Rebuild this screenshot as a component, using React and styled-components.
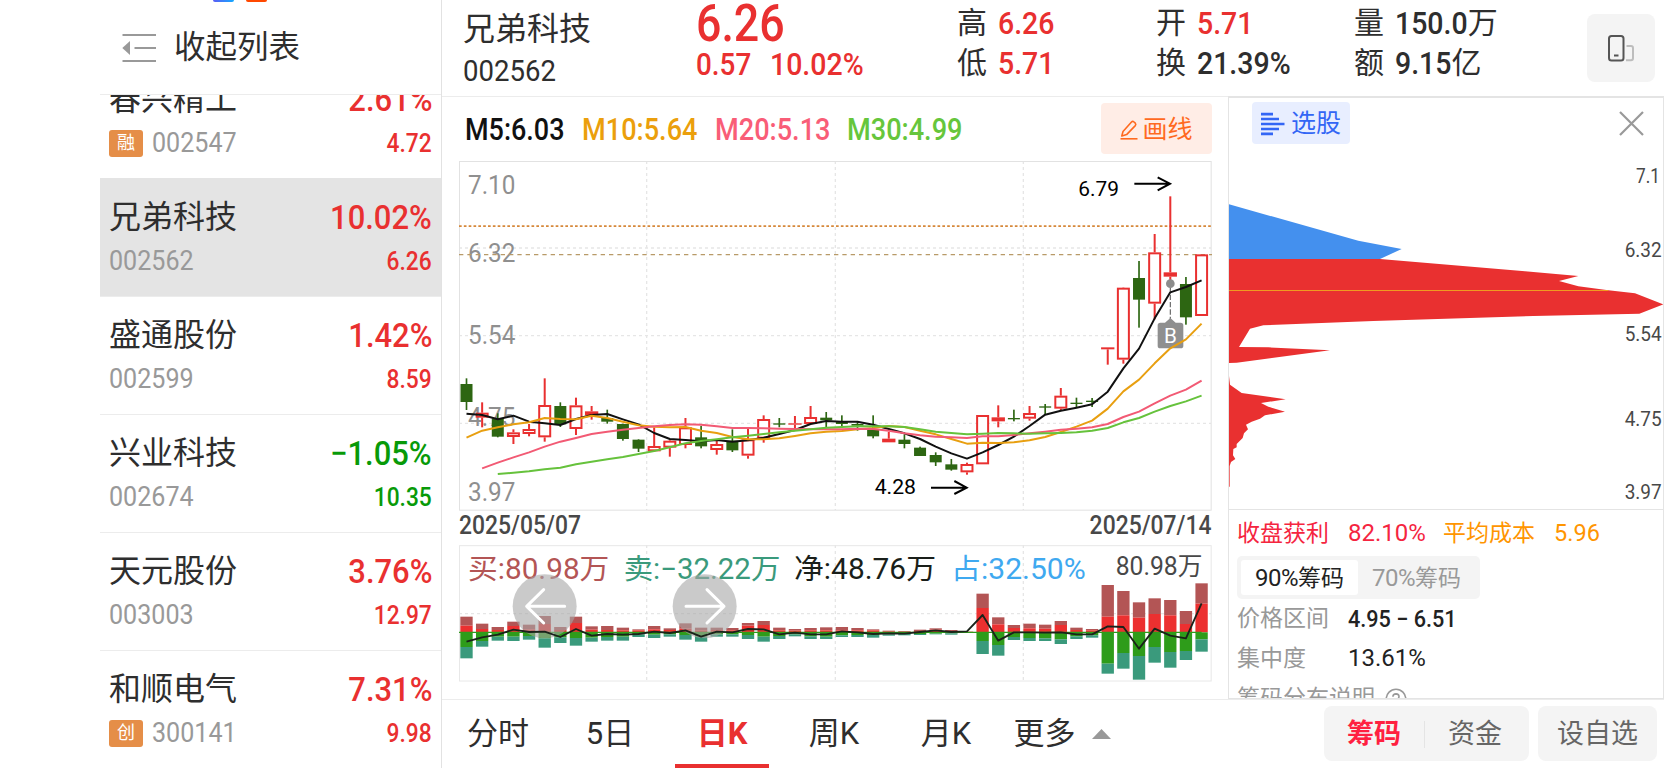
import React from 'react';
import styled, { createGlobalStyle } from 'styled-components';

const FONT = "Roboto, 'Noto Sans CJK SC', sans-serif";

const RED = '#e93030';
const GREEN = '#089a08';
const INK = '#2e2e2e';
const MUTED = '#999';
const LINE = '#ececec';

const GlobalStyle = createGlobalStyle`
  * { box-sizing: border-box; }
  body {
    margin: 0;
    background: #fff;
    color: ${INK};
    font-family: ${FONT};
    overflow: hidden;
  }
`;

/* ---------- shared ---------- */

const Screen = styled.div`
  display: flex;
  width: 1664px;
  height: 768px;
  overflow: hidden;
`;

// Digits are set a little narrower than the CJK text around them
const Num = styled.span`
  display: inline-block;
  font-size: ${props => props.$size}px;
  font-weight: ${props => props.$weight || 400};
  color: ${props => props.$color || 'inherit'};
  line-height: 1;
  white-space: nowrap;
  transform: scaleX(${props => props.$narrow || 0.92});
  transform-origin: ${props => (props.$end ? 'right' : 'left')} center;
`;

/* ---------- stock list ---------- */

const Sidebar = styled.aside`
  display: flex;
  flex-direction: column;
  width: 442px;
  padding-left: 100px;
  border-right: 1px solid #e2e2e2;
`;

const AppDots = styled.div`
  display: flex;
  gap: 12px;
  height: 2px;
  padding-left: 113px;
`;

const AppDot = styled.i`
  width: 21px;
  height: 2px;
  border-radius: 0 0 5px 5px;
  background: ${props => props.$fill};
`;

const ListHeader = styled.header`
  display: flex;
  align-items: center;
  gap: 17px;
  height: 93px;
  padding: 0 0 1px 22px;
  border-bottom: 1px solid ${LINE};
  font-size: 31.5px;
  line-height: 1;
`;

const ListTitle = styled.span`
  padding-top: 1px;
`;

const ListWindow = styled.div`
  flex: 1;
  overflow: hidden;
`;

// The list is scrolled part of the way through its first row
const List = styled.div`
  margin-top: -35px;
`;

const Row = styled.div`
  display: flex;
  flex-direction: column;
  gap: 11px;
  height: 118px;
  padding: 19px 9px 0;
  border-top: 1px solid ${props => (props.$active ? '#e4e4e4' : LINE)};
  background: ${props => (props.$active ? '#e4e4e4' : '#fff')};
`;

const RowLine = styled.div`
  display: flex;
  align-items: center;
  justify-content: space-between;
  height: ${props => props.$h}px;
`;

const StockName = styled.span`
  font-size: 32px;
  line-height: 1;
`;

const CodeGroup = styled.span`
  display: flex;
  align-items: center;
  gap: 9px;
  color: ${MUTED};
`;

const Tag = styled.span`
  width: 34px;
  height: 27px;
  border-radius: 3px;
  background: #e58e48;
  color: #fff;
  font-size: 18px;
  line-height: 26px;
  text-align: center;
`;

/* ---------- quote header ---------- */

const Main = styled.main`
  display: flex;
  flex-direction: column;
  flex: 1;
`;

const Quote = styled.header`
  display: grid;
  grid-template-columns: 233px 261px 199px 198px 233px 68px;
  height: 97px;
  padding-left: 21px;
  border-bottom: 1px solid ${LINE};
`;

const QuoteCell = styled.div`
  display: flex;
  flex-direction: column;
  padding-top: ${props => props.$top}px;
  gap: ${props => props.$gap}px;
  line-height: 1;
`;

const LastPrice = styled(Num)`
  line-height: 44px;
`;

const Change = styled.div`
  display: grid;
  grid-template-columns: 74px 1fr;
`;

const Pair = styled.div`
  display: flex;
  align-items: center;
  gap: 11px;
  height: 30px;
`;

const PairLabel = styled.span`
  font-size: 30px;
  line-height: 1;
`;

const Amount = styled.span`
  display: flex;
  align-items: center;
`;

const Unit = styled(PairLabel)`
  margin-left: ${props => props.$pull}px;
`;

const RotateButton = styled.button`
  display: flex;
  align-items: center;
  justify-content: center;
  width: 68px;
  height: 68px;
  margin-top: 14px;
  padding: 0;
  border: 0;
  border-radius: 8px;
  background: #f4f4f4;
`;

/* ---------- chart column ---------- */

const Body = styled.div`
  display: flex;
  height: 602px;
`;

const ChartColumn = styled.section`
  width: 786px;
  padding: 6px 16px 0 17px;
`;

const Averages = styled.div`
  display: flex;
  align-items: center;
  height: 51px;
  margin-bottom: 7px;
  padding-left: 6px;
`;

const Average = styled.span`
  width: ${props => props.$w}px;
  padding-top: 1px;
  color: ${props => props.$color};
`;

const DrawButton = styled.button`
  display: flex;
  align-items: center;
  justify-content: center;
  gap: 4px;
  width: 111px;
  height: 51px;
  margin-left: auto;
  padding: 2px 0 0;
  border: 0;
  border-radius: 4px;
  background: #ffede6;
  color: #ff6a1f;
  font: 25px/1 ${FONT};
`;

const Dates = styled.div`
  display: flex;
  align-items: center;
  justify-content: space-between;
  height: 34px;
  padding-bottom: 6px;
  color: #484848;
`;

const Plot = styled.svg`
  display: block;
  flex-shrink: 0;
  text { font-family: ${FONT}; }
`;

/* ---------- chip panel ---------- */

const ChipPanel = styled.section`
  display: flex;
  flex-direction: column;
  flex: 1;
  border: 1px solid #e4e4e4;
  border-top-width: 2px;
  margin-top: -1px;
  overflow: hidden;
`;

const ChipHeader = styled.div`
  display: flex;
  flex-shrink: 0;
  align-items: flex-start;
  justify-content: space-between;
  height: 51px;
  padding: 4px 19px 0 23px;
`;

const PickButton = styled.button`
  display: flex;
  align-items: center;
  gap: 6px;
  width: 98px;
  height: 42px;
  padding: 1px 0 0 9px;
  border: 0;
  border-radius: 4px;
  background: #e8eeff;
  color: #3366f5;
  font: 25px/1 ${FONT};
`;

const CloseIcon = styled.svg`
  margin-top: 9px;
`;

const ChipInfo = styled.div`
  flex: 1;
  min-height: 0;
  overflow: hidden;
  border-top: 1px solid #e4e4e4;
  padding: 4px 8px 0;
  font-size: 23px;
  line-height: 1;
`;

const InfoLine = styled.div`
  display: grid;
  grid-template-columns: ${props => props.$cols || '111px 1fr'};
  align-items: center;
  height: ${props => props.$h || 38}px;
  white-space: nowrap;
`;

const Tone = styled.span`
  color: ${props => props.$color};
`;

const Segments = styled.div`
  display: flex;
  width: 243px;
  height: 43px;
  margin-top: 4px;
  padding: 4px;
  border-radius: 5px;
  background: #f4f4f4;
`;

const Segment = styled.span`
  display: flex;
  align-items: center;
  justify-content: center;
  width: 117px;
  padding-top: 1px;
  border-radius: 3px;
  background: ${props => (props.$on ? '#fff' : 'transparent')};
  color: ${props => (props.$on ? '#222' : MUTED)};
`;

const Percent = styled.span`
  font-size: 24px;
  letter-spacing: -0.02em;
`;

const Explain = styled.div`
  display: flex;
  align-items: center;
  gap: 10px;
  height: 41px;
  color: ${MUTED};
`;

/* ---------- bottom bar ---------- */

const Footer = styled.nav`
  display: flex;
  height: 69px;
  padding-right: 7px;
  border-top: 1px solid ${LINE};
  background: #fff;
`;

const Tabs = styled.div`
  display: flex;
  flex: 1;
`;

const Tab = styled.a`
  display: flex;
  align-items: center;
  justify-content: center;
  gap: ${props => (props.$more ? 16 : 0)}px;
  width: ${props => props.$w}px;
  padding-top: ${props => (props.$on ? 3 : 1)}px;
  padding-bottom: ${props => (props.$on ? 0 : 2)}px;
  border-bottom: ${props => (props.$on ? `4px solid ${RED}` : 0)};
  margin: 0 ${props => props.$m || 0}px;
  color: ${props => (props.$on ? RED : INK)};
  font-size: 31px;
  font-weight: ${props => (props.$on ? 700 : 400)};
  line-height: 1;
`;

const Pill = styled.div`
  display: flex;
  align-items: center;
  width: ${props => props.$w}px;
  height: 55px;
  margin: 6px 0 0 9px;
  padding-top: 1px;
  border-radius: 8px;
  background: #f4f4f4;
  color: #666;
  font-size: 27px;
  line-height: 1;
`;

const PillItem = styled.span`
  flex: 1;
  text-align: center;
  color: ${props => (props.$on ? '#ff2040' : 'inherit')};
  font-weight: ${props => (props.$on ? 700 : 400)};
  & + & {
    border-left: 1px solid #e4e4e4;
    padding-right: 4px;
  }
`;

/* ---------- data ---------- */

const STOCKS = [
  { name: '春兴精工', code: '002547', pct: '2.61%', price: '4.72', tag: '融' },
  { name: '兄弟科技', code: '002562', pct: '10.02%', price: '6.26', active: true },
  { name: '盛通股份', code: '002599', pct: '1.42%', price: '8.59' },
  { name: '兴业科技', code: '002674', pct: '−1.05%', price: '10.35', down: true },
  { name: '天元股份', code: '003003', pct: '3.76%', price: '12.97' },
  { name: '和顺电气', code: '300141', pct: '7.31%', price: '9.98', tag: '创' },
];

// Plot units are thirds of a pixel
const FIRST_X = 49.5;
const STEP = 46.92;
const xAt = i => FIRST_X + STEP * i;

// [direction, high, body top, body bottom, low]
const CANDLES = [
  ['g', 685, 702, 756, 780], ['r', 757, 788, 803, 832], ['g', 790, 806, 860, 862],
  ['r', 838, 847, 861, 882], ['r', 822, 837, 852, 859], ['r', 685, 765, 862, 875],
  ['g', 757, 768, 823, 831], ['r', 743, 766, 837, 855], ['r', 768, 784, 796, 809],
  ['g', 779, 804, 815, 821], ['g', 821, 822, 867, 872], ['g', 868, 869, 896, 906],
  ['r', 832, 888, 904, 906], ['r', 870, 872, 893, 920], ['r', 804, 832, 885, 895],
  ['g', 828, 862, 889, 895], ['r', 872, 882, 900, 914], ['g', 838, 872, 901, 906],
  ['r', 836, 868, 917, 926], ['r', 796, 807, 866, 878], ['g', 804, 820, 824, 832],
  ['r', 798, 820, 824, 838], ['r', 768, 801, 822, 823], ['g', 786, 803, 811, 832],
  ['g', 796, 813, 822, 830], ['g', 815, 822, 827, 842], ['g', 796, 838, 859, 865],
  ['r', 846, 866, 877, 877], ['g', 853, 869, 882, 895], ['g', 890, 893, 918, 918],
  ['g', 907, 915, 937, 948], ['g', 927, 943, 959, 962], ['r', 938, 942, 967, 974],
  ['r', 795, 795, 943, 943], ['r', 766, 802, 814, 832], ['g', 779, 804, 808, 814],
  ['r', 768, 789, 806, 812], ['g', 762, 769, 773, 793], ['r', 714, 737, 776, 780],
  ['g', 743, 758, 762, 774], ['g', 744, 752, 756, 771], ['r', 594, 592, 598, 644],
  ['r', 412, 413, 629, 641], ['g', 333, 384, 449, 533], ['r', 252, 307, 461, 508],
  ['r', 139, 367, 380, 402], ['g', 381, 402, 502, 524], ['r', 313, 313, 498, 498],
];

const AVERAGE_LINES = [
  {
    color: '#111',
    from: 0,
    ys: [
      791, 795, 808, 797, 815, 820, 825, 807, 795, 792, 808, 823, 849, 867, 870, 874,
      870, 875, 871, 863, 852, 840, 822, 813, 815, 815, 824, 837, 850, 867, 890, 910,
      926, 907, 885, 860, 828, 794, 782, 773, 763, 725, 655, 596, 505, 427, 411, 391,
    ],
  },
  {
    color: '#e89f10',
    from: 0,
    ys: [
      863, 842, 832, 823, 817, 804, 807, 808, 797, 804, 815, 826, 830, 832, 831, 842,
      849, 861, 868, 868, 865, 858, 850, 845, 843, 838, 834, 828, 831, 842, 853, 867,
      881, 878, 879, 877, 871, 861, 846, 830, 812, 776, 724, 689, 640, 595, 568, 521,
    ],
  },
  {
    color: '#f25a74',
    from: 1,
    ys: [
      955, 938, 922, 907, 890, 875, 864, 852, 845, 839, 834, 829, 825, 823, 824, 829,
      834, 834, 835, 836, 837, 838, 838, 838, 836, 837, 842, 850, 856, 860, 862, 864,
      859, 859, 855, 850, 845, 839, 836, 832, 822, 801, 785, 760, 737, 719, 692,
    ],
  },
  {
    color: '#66c23c',
    from: 2,
    ys: [
      972, 968, 964, 958, 953, 943, 935, 928, 921, 912, 903, 892, 880, 873, 868, 862,
      857, 852, 847, 842, 838, 833, 831, 829, 829, 829, 831, 838, 845, 849, 853, 851,
      849, 850, 851, 850, 849, 847, 842, 834, 817, 804, 785, 768, 754, 737,
    ],
  },
];

// [buy top, big buy top, big sell bottom, sell bottom]
const FLOWS = [
  [350, 377, 441, 475], [371, 387, 423, 440], [381, 390, 410, 422], [365, 378, 410, 423],
  [374, 388, 408, 419], [348, 372, 415, 443], [381, 390, 412, 429], [350, 369, 414, 437],
  [379, 389, 413, 425], [378, 390, 411, 422], [383, 391, 410, 422], [388, 391, 403, 411],
  [378, 388, 404, 414], [385, 390, 403, 410], [370, 386, 405, 419], [383, 391, 410, 425],
  [383, 390, 403, 410], [384, 391, 403, 410], [369, 377, 405, 417], [363, 375, 410, 425],
  [383, 391, 408, 417], [387, 392, 403, 409], [384, 391, 409, 417], [382, 391, 410, 417],
  [381, 391, 406, 411], [384, 391, 405, 411], [388, 391, 405, 413], [392, 394, 403, 407],
  [393, 395, 402, 406], [389, 393, 402, 405], [385, 389, 401, 403], [390, 393, 400, 404],
  [395, 395, 398, 399], [281, 324, 423, 462], [352, 373, 435, 467], [375, 384, 411, 420],
  [371, 385, 414, 423], [374, 386, 415, 423], [363, 375, 418, 432], [383, 390, 409, 417],
  [387, 391, 406, 413], [255, 350, 491, 521], [273, 346, 459, 506], [307, 353, 468, 539],
  [295, 342, 441, 488], [300, 346, 456, 503], [333, 372, 453, 480], [250, 311, 418, 455],
];

const NET = [
  425, 412, 404, 389, 396, 395, 411, 387, 407, 402, 404, 402, 395, 399, 391, 410,
  395, 397, 387, 388, 403, 398, 403, 403, 394, 397, 402, 400, 401, 396, 391, 396,
  394, 345, 422, 397, 397, 398, 397, 403, 403, 379, 381, 446, 386, 407, 415, 310,
];

const GRID_X = [590, 1156, 1720];

const toPoints = (ys, from = 0) => ys.map((y, i) => `${xAt(i + from)},${y}`).join(' ');

/* ---------- charts ---------- */

function Label({ x, y, w, size, color, anchor, weight, children }) {
  return (
    <text
      x={x}
      y={y}
      fontSize={size}
      fontWeight={weight}
      fill={color}
      textAnchor={anchor}
      textLength={w}
      lengthAdjust="spacingAndGlyphs"
    >
      {children}
    </text>
  );
}

function Candle({ index, data }) {
  const [dir, high, top, bottom, low] = data;
  const x = xAt(index);
  if (dir === 'g') {
    return (
      <g fill="#2d6612">
        <rect x={x - 2.5} y={high} width="5" height={low - high} />
        <rect x={x - 18} y={top} width="36" height={bottom - top} />
      </g>
    );
  }
  const thin = bottom - top < 14;
  return (
    <g fill={RED}>
      <rect x={x - 3} y={high} width="6" height={Math.max(top - high, 0)} />
      <rect x={x - 3} y={bottom} width="6" height={Math.max(low - bottom, 0)} />
      {thin ? (
        <rect x={x - 20} y={top} width="40" height={bottom - top} />
      ) : (
        <rect
          x={x - 16.5}
          y={top + 3}
          width="33"
          height={bottom - top - 6}
          fill="#fff"
          stroke={RED}
          strokeWidth="6"
        />
      )}
    </g>
  );
}

function PriceChart() {
  return (
    <Plot width="753" height="350" viewBox="27 33 2259 1050">
      <g stroke="#e6e6e6" strokeWidth="4" strokeDasharray="9 9">
        {GRID_X.map(x => <path key={x} d={`M${x} 33V1080`} />)}
        {[294, 557, 820].map(y => <path key={y} d={`M27 ${y}H2283`} />)}
      </g>
      <rect x="28.5" y="34.5" width="2255" height="1046" fill="none" stroke="#e2e2e2" strokeWidth="3" />

      <Label x="54" y="133" w="142" size="78" color="#8f8f8f">7.10</Label>
      <Label x="54" y="337" w="142" size="78" color="#8f8f8f">6.32</Label>
      <Label x="54" y="581" w="142" size="78" color="#8f8f8f">5.54</Label>
      <Label x="54" y="828" w="142" size="78" color="#8f8f8f">4.75</Label>
      <Label x="54" y="1052" w="142" size="78" color="#8f8f8f">3.97</Label>

      <path d="M27 228.5H2286" stroke="#d6883a" strokeWidth="5" strokeDasharray="8 6.5" />
      <path d="M27 314H2286" stroke="#b89a68" strokeWidth="4" strokeDasharray="13 12" />

      {CANDLES.map((data, i) => <Candle key={i} index={i} data={data} />)}

      <path d="M2161 412V512" stroke="#666" strokeWidth="3.5" strokeDasharray="16 6" />
      <circle cx="2161" cy="401" r="13" fill="#8c8c8c" />
      <path d="M2131 518H2145L2161 504L2177 518H2192Q2200 518 2200 526V587Q2200 595 2192 595H2131Q2123 595 2123 587V526Q2123 518 2131 518Z" fill="#8f8f8f" />
      <Label x="2161" y="578" size="62" color="#fff" anchor="middle">B</Label>

      {AVERAGE_LINES.map(line => (
        <polyline
          key={line.color}
          points={toPoints(line.ys, line.from)}
          fill="none"
          stroke={line.color}
          strokeWidth="6"
          strokeLinejoin="round"
        />
      ))}

      <g fill="none" stroke="#000" strokeWidth="6">
        <path d="M2053 101H2160M2123 82L2160 101L2123 121" />
        <path d="M1443 1013H1550M1513 993L1550 1013L1513 1032" />
      </g>
      <Label x="1885" y="138" w="122" size="63" color="#000">6.79</Label>
      <Label x="1274" y="1032" w="124" size="63" color="#000">4.28</Label>
    </Plot>
  );
}

function FlowChart() {
  return (
    <Plot width="753" height="137" viewBox="27 135 2259 411">
      <g stroke="#e6e6e6" strokeWidth="4" strokeDasharray="9 9">
        {GRID_X.map(x => <path key={x} d={`M${x} 135V543`} />)}
        <path d="M27 341H2283" />
      </g>
      <rect x="28.5" y="137" width="2255" height="406" fill="none" stroke="#e8e8e8" strokeWidth="3" />

      <Label x="54" y="236" w="424" size="86" color="#b35555">买:80.98万</Label>
      <Label x="521" y="236" w="470" size="86" color="#3a9a7c">卖:−32.22万</Label>
      <Label x="1032" y="236" w="426" size="86" color="#1a1f1a">净:48.76万</Label>
      <Label x="1503" y="236" w="404" size="86" color="#3fa9f0">占:32.50%</Label>
      <Label x="1997" y="224" w="260" size="76" color="#484848">80.98万</Label>

      {FLOWS.map(([buy, bigBuy, bigSell, sell], i) => (
        <g key={i}>
          <rect x={xAt(i) - 18.5} y={buy} width="37" height={bigBuy - buy} fill="#b35555" />
          <rect x={xAt(i) - 18.5} y={bigBuy} width="37" height={397 - bigBuy} fill="#ec3030" />
          <rect x={xAt(i) - 18.5} y="397" width="37" height={bigSell - 397} fill="#2e9c1a" />
          <rect x={xAt(i) - 18.5} y={bigSell} width="37" height={sell - bigSell} fill="#3a9a7c" />
        </g>
      ))}
      <path d={`M27 397H${xAt(47)}`} stroke="#2e9c1a" strokeWidth="4" />

      {[284, 764].map(x => <circle key={x} cx={x} cy="319" r="96" fill="#a6a6a6" fillOpacity="0.6" />)}
      <polyline points={toPoints(NET)} fill="none" stroke="#1a221a" strokeWidth="5.5" strokeLinejoin="round" />
      <g fill="none" stroke="#fff" strokeWidth="9" strokeLinecap="round" strokeLinejoin="round">
        <path d="M344 319H230M281 269L230 319L281 369" />
        <path d="M708 319H822M771 269L822 319L771 369" />
      </g>
    </Plot>
  );
}

function ChipChart() {
  return (
    <Plot width="434" height="360" viewBox="27 177 1302 1080">
      <path d="M27 343L415 452L545 477L480 507H27Z" fill="#4490ee" />
      <path
        fill={RED}
        d="M27 507H480L915 544L1075 558L1017 573L1075 589L1165 601L1245 610L1330 643L1258 671L940 678
          L460 693L130 706L90 716L57 771L145 772L330 781L50 818L27 819Z"
      />
      <path
        fill={RED}
        d="M27 858L30 884L65 909L197 928L123 939L145 950L195 965L135 976L120 986L95 995L78 1004L84 1018
          L72 1030L68 1044L50 1062V1072L40 1077L39 1096L46 1107L33 1116L29 1128V1190H27Z"
      />
      <path d="M27 601.5H1165" stroke="#f09a20" strokeWidth="3.5" />
      <Label x="1320" y="280" w="72" size="59" color="#484848" anchor="end">7.1</Label>
      <Label x="1325" y="500" w="111" size="59" color="#484848" anchor="end">6.32</Label>
      <Label x="1325" y="753" w="111" size="59" color="#484848" anchor="end">5.54</Label>
      <Label x="1325" y="1007" w="111" size="59" color="#484848" anchor="end">4.75</Label>
      <Label x="1325" y="1226" w="111" size="59" color="#484848" anchor="end">3.97</Label>
    </Plot>
  );
}

/* ---------- icons ---------- */

const CollapseIcon = () => (
  <svg width="35" height="30" viewBox="0 0 35 30" fill="none" stroke={MUTED} strokeWidth="2">
    <path d="M0.5 2H34M12.5 15H34M0.5 28H34" />
    <path d="M0.3 15L8 8V22Z" fill={MUTED} stroke="none" />
  </svg>
);

const PhonesIcon = () => (
  <svg width="28" height="28" viewBox="0 0 28 28" fill="none" strokeWidth="2">
    <rect x="2" y="2" width="14.5" height="24.5" rx="2.5" stroke="#555" />
    <path d="M7 21.5H11.5" stroke="#555" />
    <path d="M19.5 12H24Q26 12 26 14V24Q26 26.3 24 26.3H19" stroke="#bdbdbd" />
  </svg>
);

const PencilIcon = () => (
  <svg width="18" height="22" viewBox="0 0 18 22" fill="none" stroke="#ff6a1f" strokeWidth="1.6" strokeLinejoin="round">
    <path d="M1.8 17L3 12.5L11.5 3Q12.7 1.8 14 3L15.3 4.2Q16.3 5.4 15.3 6.6L6.6 15.6Z" />
    <path d="M0.5 19.8H17.5" />
  </svg>
);

const BarsIcon = () => (
  <svg width="24" height="24" viewBox="0 0 24 24" stroke="#3366f5" strokeWidth="2.7">
    <path d="M0 2.2H12M0 7H18M0 12H23.5M0 17H18M0 21.8H12" />
  </svg>
);

const HelpIcon = () => (
  <svg width="22" height="22" viewBox="0 0 22 22" fill="none" stroke={MUTED} strokeWidth="1.6">
    <circle cx="11" cy="11" r="9.8" />
    <path d="M7.9 8.8Q8 5.9 11 5.9Q14 6 14 8.6Q14 10.2 12.4 11.2Q11 12 11 13.6M11 15.2V17" />
  </svg>
);

/* ---------- sections ---------- */

function StockRow({ stock }) {
  const tone = stock.down ? GREEN : RED;
  return (
    <Row $active={stock.active}>
      <RowLine $h={38}>
        <StockName>{stock.name}</StockName>
        <Num $size={34} $weight={500} $color={tone} $narrow={0.91} $end>{stock.pct}</Num>
      </RowLine>
      <RowLine $h={28}>
        <CodeGroup>
          {stock.tag && <Tag>{stock.tag}</Tag>}
          <Num $size={27} $narrow={0.93}>{stock.code}</Num>
        </CodeGroup>
        <Num $size={25} $weight={500} $color={tone} $narrow={0.91} $end>{stock.price}</Num>
      </RowLine>
    </Row>
  );
}

function Stat({ label, value, unit, pull, color }) {
  return (
    <Pair>
      <PairLabel>{label}</PairLabel>
      <Amount>
        <Num $size={32} $weight={500} $color={color} $narrow={0.89}>{value}</Num>
        {unit && <Unit $pull={pull}>{unit}</Unit>}
      </Amount>
    </Pair>
  );
}

export default function App() {
  return (
    <>
      <GlobalStyle />
      <Screen>
        <Sidebar>
          <AppDots>
            <AppDot $fill="linear-gradient(90deg, #5a5cf5, #14a9ff)" />
            <AppDot $fill="#ff4800" />
          </AppDots>
          <ListHeader>
            <CollapseIcon />
            <ListTitle>收起列表</ListTitle>
          </ListHeader>
          <ListWindow>
            <List>
              {STOCKS.map(stock => <StockRow key={stock.code} stock={stock} />)}
            </List>
          </ListWindow>
        </Sidebar>

        <Main>
          <Quote>
            <QuoteCell $top={13} $gap={12}>
              <StockName>兄弟科技</StockName>
              <Num $size={29} $narrow={0.95}>002562</Num>
            </QuoteCell>
            <QuoteCell $top={2} $gap={2}>
              <LastPrice $size={52} $weight={500} $color={RED} $narrow={0.86}>6.26</LastPrice>
              <Change>
                <Num $size={32} $weight={500} $color={RED} $narrow={0.87}>0.57</Num>
                <Num $size={32} $weight={500} $color={RED} $narrow={0.89}>10.02%</Num>
              </Change>
            </QuoteCell>
            <QuoteCell $top={8} $gap={10}>
              <Stat label="高" value="6.26" color={RED} />
              <Stat label="低" value="5.71" color={RED} />
            </QuoteCell>
            <QuoteCell $top={8} $gap={10}>
              <Stat label="开" value="5.71" color={RED} />
              <Stat label="换" value="21.39%" />
            </QuoteCell>
            <QuoteCell $top={8} $gap={10}>
              <Stat label="量" value="150.0" unit="万" pull={-9} />
              <Stat label="额" value="9.15" unit="亿" pull={-7} />
            </QuoteCell>
            <RotateButton>
              <PhonesIcon />
            </RotateButton>
          </Quote>

          <Body>
            <ChartColumn>
              <Averages>
                <Average $w={117} $color="#111"><Num $size={31} $weight={500} $narrow={0.87}>M5:6.03</Num></Average>
                <Average $w={133} $color="#eb9f0c"><Num $size={31} $weight={500} $narrow={0.875}>M10:5.64</Num></Average>
                <Average $w={132} $color="#f95d77"><Num $size={31} $weight={500} $narrow={0.875}>M20:5.13</Num></Average>
                <Average $w={120} $color="#66c63c"><Num $size={31} $weight={500} $narrow={0.875}>M30:4.99</Num></Average>
                <DrawButton>
                  <PencilIcon />
                  画线
                </DrawButton>
              </Averages>
              <PriceChart />
              <Dates>
                <Num $size={26} $weight={500} $narrow={0.88}>2025/05/07</Num>
                <Num $size={26} $weight={500} $narrow={0.88} $end>2025/07/14</Num>
              </Dates>
              <FlowChart />
            </ChartColumn>

            <ChipPanel>
              <ChipHeader>
                <PickButton>
                  <BarsIcon />
                  选股
                </PickButton>
                <CloseIcon width="25" height="25" viewBox="0 0 25 25" stroke={MUTED} strokeWidth="2.2">
                  <path d="M1 1L24 24M24 1L1 24" />
                </CloseIcon>
              </ChipHeader>
              <ChipChart />
              <ChipInfo>
                <InfoLine $cols="111px 95px 111px 1fr">
                  <Tone $color="#f5253f">收盘获利</Tone>
                  <Num $size={24} $narrow={1} $color="#f5253f">82.10%</Num>
                  <Tone $color="#ff9500">平均成本</Tone>
                  <Num $size={24} $narrow={0.98} $color="#ff9500">5.96</Num>
                </InfoLine>
                <Segments>
                  <Segment $on><Percent>90%</Percent>筹码</Segment>
                  <Segment><Percent>70%</Percent>筹码</Segment>
                </Segments>
                <InfoLine $h={39}>
                  <Tone $color={MUTED}>价格区间</Tone>
                  <Num $size={24} $weight={500} $narrow={0.9} $color="#222">4.95 − 6.51</Num>
                </InfoLine>
                <InfoLine $h={40}>
                  <Tone $color={MUTED}>集中度</Tone>
                  <Num $size={24} $narrow={1} $color="#222">13.61%</Num>
                </InfoLine>
                <Explain>
                  筹码分布说明
                  <HelpIcon />
                </Explain>
              </ChipInfo>
            </ChipPanel>
          </Body>

          <Footer>
            <Tabs>
              <Tab $w={112}>分时</Tab>
              <Tab $w={112}>5日</Tab>
              <Tab $w={94} $m={9} $on>日K</Tab>
              <Tab $w={112}>周K</Tab>
              <Tab $w={112}>月K</Tab>
              <Tab $w={120} $more>
                更多
                <svg width="19" height="10" viewBox="0 0 19 10"><path d="M0 10L9.5 0L19 10Z" fill={MUTED} /></svg>
              </Tab>
            </Tabs>
            <Pill $w={205}>
              <PillItem $on>筹码</PillItem>
              <PillItem>资金</PillItem>
            </Pill>
            <Pill $w={119}>
              <PillItem>设自选</PillItem>
            </Pill>
          </Footer>
        </Main>
      </Screen>
    </>
  );
}
